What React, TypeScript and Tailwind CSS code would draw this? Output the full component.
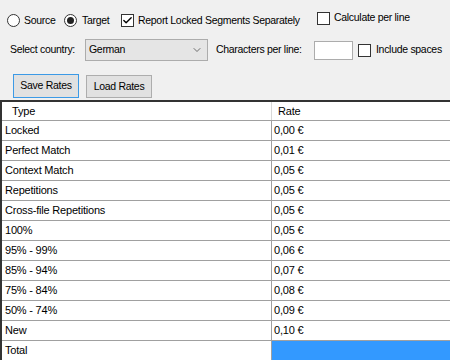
import { Check, ChevronDown } from 'lucide-react';

const rows = [
  ['Locked', '0,00 €'],
  ['Perfect Match', '0,01 €'],
  ['Context Match', '0,05 €'],
  ['Repetitions', '0,05 €'],
  ['Cross-file Repetitions', '0,05 €'],
  ['100%', '0,05 €'],
  ['95% - 99%', '0,06 €'],
  ['85% - 94%', '0,07 €'],
  ['75% - 84%', '0,08 €'],
  ['50% - 74%', '0,09 €'],
  ['New', '0,10 €'],
];

function Radio({ checked }: { checked?: boolean }) {
  return (
    <span className="w-[13px] h-[13px] shrink-0 rounded-full border border-[#333] bg-white flex items-center justify-center">
      {checked && <span className="w-[7px] h-[7px] rounded-full bg-[#222]" />}
    </span>
  );
}

function Box({ checked }: { checked?: boolean }) {
  return (
    <span className="w-[13px] h-[13px] shrink-0 border border-[#333] bg-white flex items-center justify-center">
      {checked && <Check className="w-[11px] h-[11px] text-black" strokeWidth={3} />}
    </span>
  );
}

export default function App() {
  return (
    <div className="w-[450px] h-[360px] overflow-hidden bg-[#f0f0f0] text-[11px] tracking-[-0.2px] text-black whitespace-nowrap" style={{ fontFamily: '"Liberation Sans", Arial, sans-serif' }}>
      {/* Options */}
      <div className="h-[100px] pt-[14px] text-[10.5px] tracking-[-0.3px]">
        <div className="flex items-center h-[13px] pl-[7px]">
          <Radio />
          <span className="ml-[4px] w-[40px] shrink-0">Source</span>
          <Radio checked />
          <span className="ml-[5px] w-[39px] shrink-0">Target</span>
          <Box checked />
          <span className="ml-[4px] w-[179px] shrink-0">Report Locked Segments Separately</span>
          <span className="flex items-center -mt-[5px]">
            <Box />
            <span className="ml-[4px]">Calculate per line</span>
          </span>
        </div>
        <div className="flex items-center mt-[12px] pl-[10px] h-[22px]">
          <span className="w-[75px] shrink-0">Select country:</span>
          <div className="w-[123px] h-[22px] shrink-0 border border-[#acacac] bg-[#e5e5e5] flex items-center justify-between pl-[3px] pr-[4px]">
            <span>German</span>
            <ChevronDown className="w-[12px] h-[12px] text-[#444]" strokeWidth={1.5} />
          </div>
          <span className="ml-[8px] w-[98px] shrink-0">Characters per line:</span>
          <div className="w-[39px] h-[19px] shrink-0 border border-[#acacac] bg-white" />
          <span className="ml-[5px]"><Box /></span>
          <span className="ml-[5px]">Include spaces</span>
        </div>
        <div className="flex items-start gap-[7px] pl-[13px] mt-[13px]">
          <button className="w-[66px] h-[24px] border border-[#3c9ae6] bg-[#e1e1e1]">Save Rates</button>
          <button className="w-[66px] h-[23px] mt-[1px] border border-[#adadad] bg-[#e1e1e1]">Load Rates</button>
        </div>
      </div>

      {/* Grid */}
      <div className="bg-white border-t-2 border-l-2 border-[#333] h-[260px]">
        <div className="grid grid-cols-[270px_1fr] h-[19px] border-b border-[#a0a0a0]">
          <div className="pl-[10px] flex items-center border-r border-[#d8d8d8]">Type</div>
          <div className="pl-[6px] flex items-center">Rate</div>
        </div>
        {rows.map(([type, rate]) => (
          <div key={type} className="grid grid-cols-[270px_1fr] h-[20px] border-b border-[#a0a0a0]">
            <div className="pl-[3px] flex items-center border-r border-[#a0a0a0]">{type}</div>
            <div className="pl-[2px] flex items-center">{rate}</div>
          </div>
        ))}
        <div className="grid grid-cols-[270px_1fr] h-[20px] border-b border-[#a0a0a0]">
          <div className="pl-[3px] flex items-center border-r border-[#a0a0a0]">Total</div>
          <div className="bg-[#3399ff]" />
        </div>
      </div>
    </div>
  );
}
